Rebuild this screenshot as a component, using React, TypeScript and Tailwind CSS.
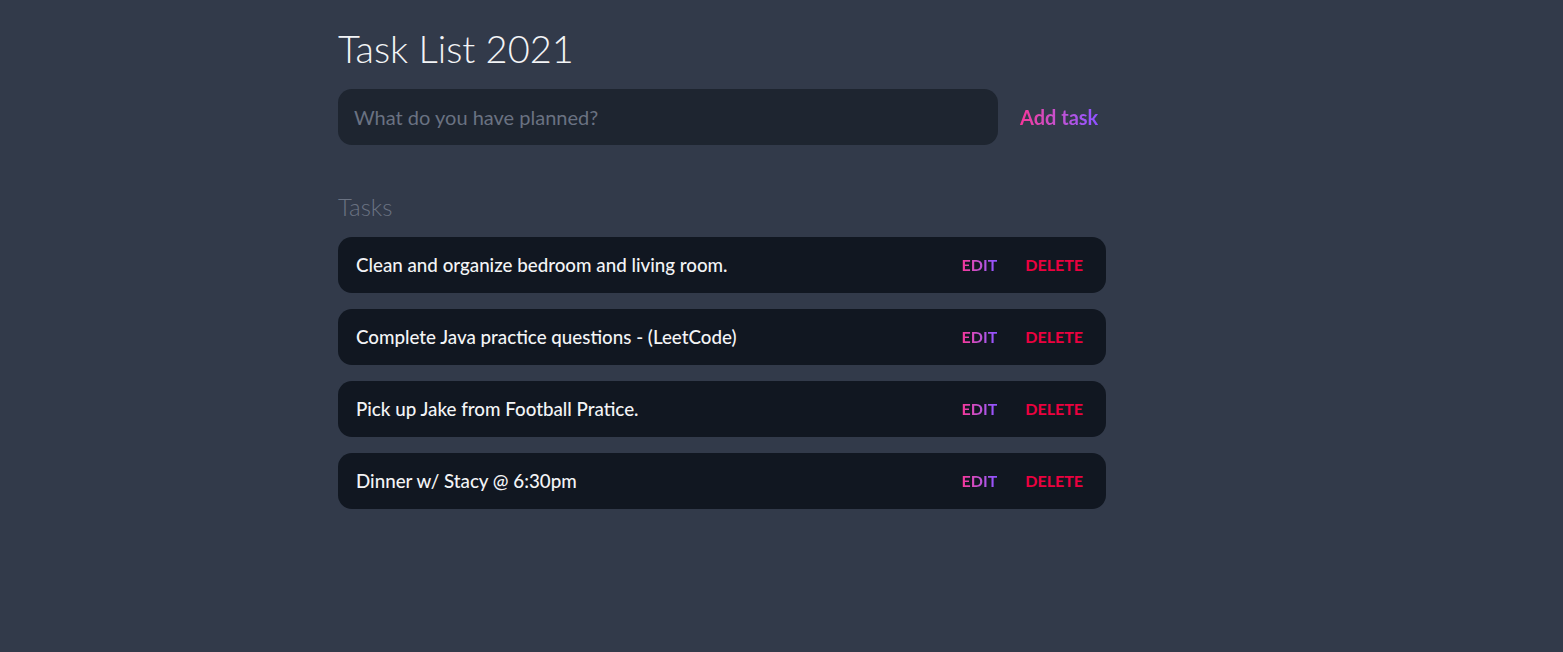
import React from 'react';

const tasks = [
  'Clean and organize bedroom and living room.',
  'Complete Java practice questions - (LeetCode)',
  'Pick up Jake from Football Pratice.',
  'Dinner w/ Stacy @ 6:30pm',
];

const gradientText =
  'bg-gradient-to-r from-pink-500 to-violet-500 bg-clip-text text-transparent';

export default function App() {
  return (
    <div
      className="min-h-screen bg-[#323a4a] text-white"
      style={{ fontFamily: 'Lato, "Open Sans", sans-serif' }}
    >
      <div className="pl-[338px] pt-[24px]">
        <div className="w-[768px]">
          <h1 className="text-[38px] font-light leading-[48px] text-gray-100">Task List 2021</h1>

          <form className="mt-[17px] flex items-center gap-[22px]" onSubmit={(e) => e.preventDefault()}>
            <input
              type="text"
              placeholder="What do you have planned?"
              className="h-[56px] w-[660px] rounded-[14px] bg-[#1e2530] px-4 text-[20px] text-white placeholder:text-gray-500 outline-none"
            />
            <button type="submit" className={`text-[20px] font-bold ${gradientText}`}>
              Add task
            </button>
          </form>

          <section className="mt-[46px]">
            <h2 className="text-2xl font-light leading-[32px] text-gray-500">Tasks</h2>
            <ul className="mt-[14px] flex flex-col gap-4">
              {tasks.map((t) => (
                <li
                  key={t}
                  className="flex h-[56px] items-center justify-between rounded-[14px] bg-[#111721] pl-[18px] pr-[23px]"
                >
                  <span className="text-[18.75px] font-medium text-gray-100">{t}</span>
                  <div className="flex items-center gap-7">
                    <button className={`text-base font-bold uppercase ${gradientText}`}>Edit</button>
                    <button className="text-base font-bold uppercase text-rose-600">Delete</button>
                  </div>
                </li>
              ))}
            </ul>
          </section>
        </div>
      </div>
    </div>
  );
}
